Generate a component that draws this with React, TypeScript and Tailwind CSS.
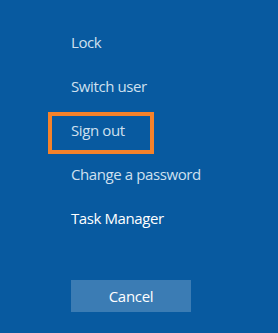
const items = [
  { label: "Lock", bright: false, selected: false },
  { label: "Switch user", bright: false, selected: false },
  { label: "Sign out", bright: false, selected: true },
  { label: "Change a password", bright: false, selected: false },
  { label: "Task Manager", bright: true, selected: false },
];

export default function App() {
  return (
    <div
      className="w-[278px] h-[333px] bg-[#085aa0] pl-[71px] pt-[20px] overflow-hidden"
      style={{ fontFamily: '"Open Sans", "Noto Sans", sans-serif' }}
    >
      <ul className="flex flex-col">
        {items.map((it) => (
          <li key={it.label} className="relative h-[44px] leading-[44px] text-[15px] tracking-[-0.4px]">
            <span className={it.bright ? "text-white" : "text-[#cfe0ef]"}>{it.label}</span>
            {it.selected ? (
              <span className="absolute left-[-23px] top-[4px] w-[106px] h-[42px] border-4 border-[#f5822a] pointer-events-none" />
            ) : null}
          </li>
        ))}
      </ul>
      <button className="mt-[40px] w-[120px] h-[32px] bg-[#3b7cb4] text-[15px] tracking-[-0.3px] text-white">Cancel</button>
    </div>
  );
}
